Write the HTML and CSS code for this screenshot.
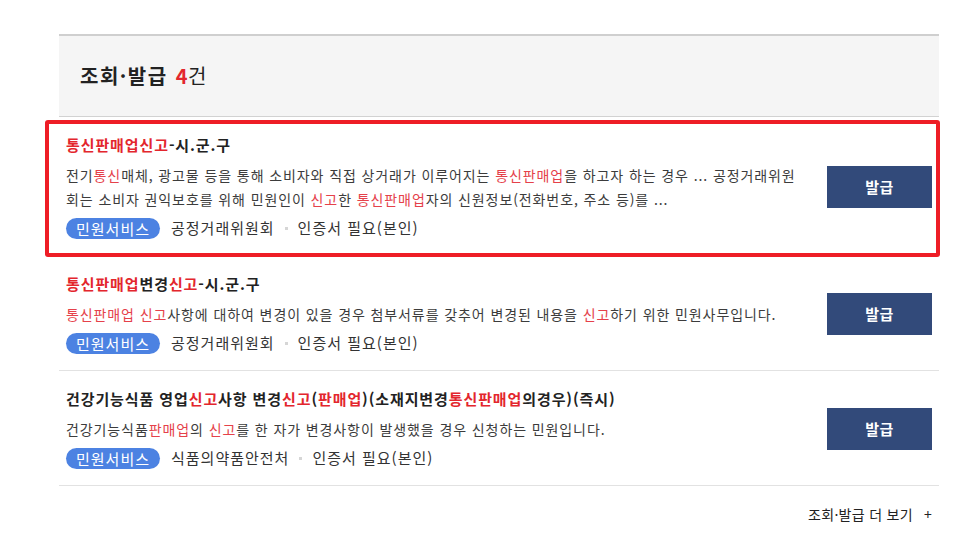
FILE: index.html
```html
<!DOCTYPE html>
<html lang="ko">
<head>
<meta charset="utf-8">
<title>조회·발급</title>
<link rel="stylesheet" href="styles.css">
</head>
<body>
<div class="wrap">
  <div class="head">
    <h2 class="head-title">조회·발급 <span class="count"><em>4</em>건</span></h2>
  </div>
  <ul class="list">
    <li class="item is-focused">
      <div class="item-body">
        <p class="item-title"><span class="hl">통신판매업신고</span>-시.군.구</p>
        <p class="item-desc">전기<span class="hl">통신</span>매체, 광고물 등을 통해 소비자와 직접 상거래가 이루어지는 <span class="hl">통신판매업</span>을 하고자 하는 경우 ... 공정거래위원회는 소비자 권익보호를 위해 민원인이 <span class="hl">신고</span>한 <span class="hl">통신판매업</span>자의 신원정보(전화번호, 주소 등)를 ...</p>
        <div class="item-meta">
          <span class="pill">민원서비스</span>
          <span class="meta-text">공정거래위원회</span>
          <span class="dot"></span>
          <span class="meta-text">인증서 필요(본인)</span>
        </div>
      </div>
      <button class="btn" type="button">발급</button>
    </li>
    <li class="item">
      <div class="item-body">
        <p class="item-title"><span class="hl">통신판매업</span>변경<span class="hl">신고</span>-시.군.구</p>
        <p class="item-desc"><span class="hl">통신판매업 신고</span>사항에 대하여 변경이 있을 경우 첨부서류를 갖추어 변경된 내용을 <span class="hl">신고</span>하기 위한 민원사무입니다.</p>
        <div class="item-meta">
          <span class="pill">민원서비스</span>
          <span class="meta-text">공정거래위원회</span>
          <span class="dot"></span>
          <span class="meta-text">인증서 필요(본인)</span>
        </div>
      </div>
      <button class="btn" type="button">발급</button>
    </li>
    <li class="item">
      <div class="item-body">
        <p class="item-title">건강기능식품 영업<span class="hl">신고</span>사항 변경<span class="hl">신고</span>(<span class="hl">판매업</span>)(소재지변경<span class="hl">통신판매업</span>의경우)(즉시)</p>
        <p class="item-desc">건강기능식품<span class="hl">판매업</span>의 <span class="hl">신고</span>를 한 자가 변경사항이 발생했을 경우 신청하는 민원입니다.</p>
        <div class="item-meta">
          <span class="pill">민원서비스</span>
          <span class="meta-text">식품의약품안전처</span>
          <span class="dot"></span>
          <span class="meta-text">인증서 필요(본인)</span>
        </div>
      </div>
      <button class="btn" type="button">발급</button>
    </li>
  </ul>
  <div class="more-row">
    <a class="more" href="#">조회·발급 더 보기<span class="plus">+</span></a>
  </div>
</div>
</body>
</html>
```

FILE: styles.css
```css
* { box-sizing: border-box; }

body {
  margin: 0;
  background: #fff;
  font-family: "Noto Sans CJK KR", "Noto Sans", sans-serif;
  color: #222;
}

.wrap {
  width: 880px;
  margin-left: 59px;
  padding-top: 34px;
}

.head {
  height: 83px;
  background: #f5f5f5;
  border-top: 2px solid #cfcfcf;
  border-bottom: 1px solid #d2d2d2;
  display: flex;
  align-items: center;
  padding-left: 21px;
}

.head-title {
  margin: 0;
  font-size: 20px;
  line-height: 26px;
  font-weight: 700;
  color: #222;
  letter-spacing: 1.5px;
}

.count {
  font-weight: 400;
  margin-left: 1px;
  letter-spacing: 0.5px;
}

.count em {
  font-style: normal;
  font-weight: 700;
  color: #e3262d;
}

.list {
  list-style: none;
  margin: 0;
  padding: 0;
}

.item {
  position: relative;
  display: flex;
  align-items: center;
  justify-content: space-between;
  padding: 17px 7px 16px;
  border-bottom: 1px solid #e2e2e2;
}

.is-focused::after {
  content: "";
  position: absolute;
  top: 3px;
  bottom: -2px;
  left: -14px;
  right: -1px;
  border: 4px solid #ee1d26;
  border-radius: 3px;
  pointer-events: none;
}

.item-body {
  width: 735px;
}

.item-title {
  margin: 0;
  font-size: 15px;
  line-height: 22px;
  font-weight: 700;
  color: #222;
  letter-spacing: 0.9px;
}

.item-desc {
  margin: 7px 0 0;
  font-size: 14px;
  line-height: 24px;
  color: #3c3c3c;
  letter-spacing: 0.9px;
}

.hl { color: #e3262d; }
.item-desc .hl { color: #e5414a; }

.item-meta {
  margin-top: 6px;
  display: flex;
  align-items: center;
  height: 22px;
  font-size: 15px;
  color: #333;
}

.pill {
  display: inline-flex;
  align-items: center;
  justify-content: center;
  width: 94px;
  height: 21px;
  border-radius: 11px;
  background: #4c82e2;
  color: #fff;
  font-size: 15px;
  letter-spacing: 1px;
  margin-right: 11px;
}

.meta-text {
  line-height: 22px;
  letter-spacing: 1px;
}

.dot {
  width: 3px;
  height: 3px;
  background: #d6d6d6;
  margin: 0 10px;
}

.btn {
  flex: none;
  width: 105px;
  height: 42px;
  border: 0;
  background: #324a7a;
  color: #fff;
  font-family: inherit;
  font-size: 15px;
  font-weight: 700;
  letter-spacing: 0.5px;
  cursor: pointer;
}

.more-row {
  display: flex;
  justify-content: flex-end;
  padding: 18px 7px 0 0;
}

.more {
  font-size: 14px;
  line-height: 20px;
  color: #222;
  text-decoration: none;
  letter-spacing: 0.3px;
}

.plus {
  margin-left: 11px;
  font-size: 14px;
}
```
